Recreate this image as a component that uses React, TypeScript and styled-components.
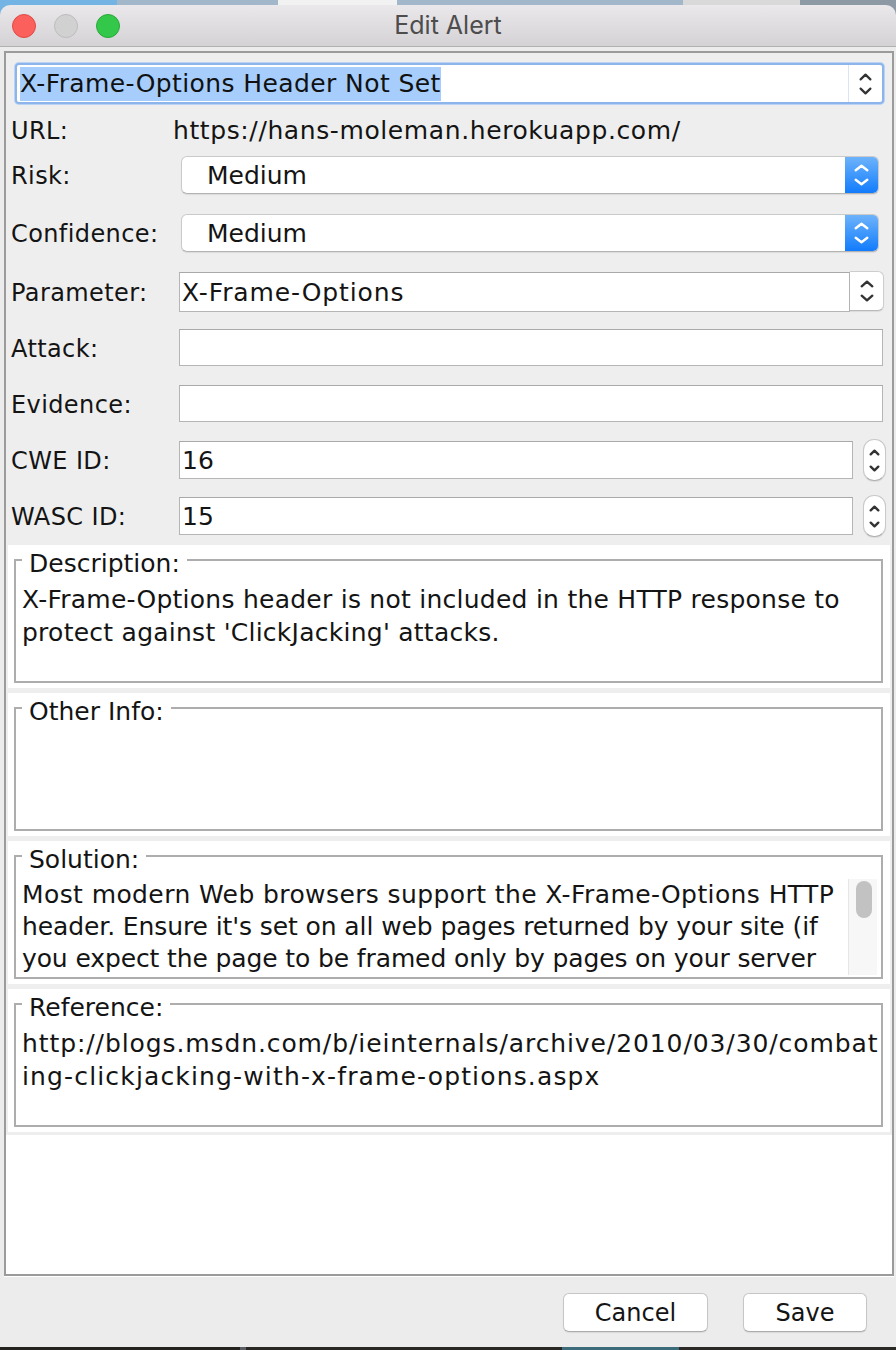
import React from 'react';
import styled, { createGlobalStyle } from 'styled-components';

const GlobalStyle = createGlobalStyle`
  * { box-sizing: border-box; }
  html, body { margin: 0; padding: 0; }
  body {
    width: 896px;
    height: 1350px;
    overflow: hidden;
    background: #ececec;
    font-family: "DejaVu Sans", "Noto Sans", sans-serif;
    color: #161616;
  }
`;

const Window = styled.div`
  width: 896px;
  height: 1350px;
  display: flex;
  flex-direction: column;
  background: #ececec;
`;

const Desktop = styled.div`
  flex: none;
  padding-top: 5px;
  background: linear-gradient(
    90deg,
    #74b4e4 0 117px,
    #a3b7cb 117px 278px,
    #f2f2f2 278px 397px,
    #a3b7cb 397px 683px,
    #d9d9d9 683px 800px,
    #8d99a5 800px
  );
`;

const TitleBar = styled.div`
  height: 42px;
  display: grid;
  grid-template-columns: 1fr auto 1fr;
  align-items: center;
  background: linear-gradient(#eae8ea, #d4d2d4);
  border-bottom: 1px solid #b1b1b1;
  border-radius: 10px 10px 0 0;
`;

const Lights = styled.div`
  display: flex;
  gap: 18px;
  padding-left: 12px;
`;

const Light = styled.span<{ $fill: string; $edge: string }>`
  width: 24px;
  height: 24px;
  border-radius: 50%;
  background: ${(p) => p.$fill};
  border: 1px solid ${(p) => p.$edge};
`;

const Title = styled.div`
  font-family: Inter, "Liberation Sans", sans-serif;
  font-size: 25px;
  color: #4d4d4d;
  line-height: 1;
`;

const Frame = styled.div`
  margin: 4px 2px 0 4px;
  height: 1225px;
  border: 2px solid #9b9b9b;
  background: #ffffff;
  display: flex;
  flex-direction: column;
  box-shadow: 0 1px 0 #ffffff;
`;

const Form = styled.div`
  background: #eeeeee;
  padding: 0 6px 8px 5px;
  display: flex;
  flex-direction: column;
`;

const HeaderCombo = styled.div`
  margin: 10px 2px 0 4px;
  height: 41px;
  display: flex;
  background: #ffffff;
  border: 2px solid #8db5eb;
  border-radius: 4px;
  box-shadow: 0 0 0 1px #b9d3f4;
`;

const HeaderInput = styled.div`
  flex: 1;
  display: flex;
  align-items: center;
  padding-left: 3px;
  font-size: 25px;
  letter-spacing: 0.4px;
`;

const Selected = styled.span`
  display: inline-block;
  line-height: 34px;
  height: 34px;
  background: #a6cdfb;
  color: #111111;
  white-space: nowrap;
`;

const ComboArrow = styled.div`
  width: 34px;
  display: flex;
  align-items: center;
  justify-content: center;
  background: #ffffff;
  border-left: 1px solid #d9e5f5;
  border-radius: 0 4px 4px 0;
`;

const Row = styled.div<{ $mt: number; $h: number }>`
  display: grid;
  grid-template-columns: 168px 1fr;
  align-items: center;
  margin-top: ${(p) => p.$mt}px;
  height: ${(p) => p.$h}px;
`;

const Label = styled.div`
  padding-top: 2px;
  font-size: 24px;
  letter-spacing: 0.4px;
  line-height: 1;
  white-space: nowrap;
  color: #141414;
`;

const UrlValue = styled.div`
  margin-left: -6px;
  font-size: 25px;
  letter-spacing: 0.6px;
  line-height: 1;
  white-space: nowrap;
  color: #141414;
`;

const Select = styled.div`
  margin: 0 7px 0 2px;
  height: 38px;
  display: flex;
  background: #ffffff;
  border: 1px solid #cacaca;
  border-bottom-color: #b3b3b3;
  border-radius: 6px;
  box-shadow: 0 1px 1px rgba(0, 0, 0, 0.08);
  overflow: hidden;
`;

const SelectValue = styled.div`
  flex: 1;
  display: flex;
  align-items: center;
  padding-left: 25px;
  font-size: 25px;
  color: #141414;
`;

const BlueButton = styled.div`
  width: 33px;
  display: flex;
  align-items: center;
  justify-content: center;
  background: linear-gradient(#6db3fb, #127cfd);
`;

const ParamCombo = styled.div`
  margin-right: 2px;
  height: 40px;
  display: flex;
`;

const Field = styled.div<{ $h: number; $ls?: number }>`
  flex: 1;
  height: ${(p) => p.$h}px;
  display: flex;
  align-items: center;
  padding-left: 2px;
  background: #ffffff;
  border: 1px solid #b5b5b5;
  border-top-color: #a9a9a9;
  font-size: 25px;
  letter-spacing: ${(p) => p.$ls ?? 0}px;
  white-space: nowrap;
  color: #141414;
`;

const TextField = styled(Field)`
  margin-right: 3px;
`;

const ArrowButton = styled.div`
  width: 34px;
  height: 40px;
  margin-top: -1px;
  display: flex;
  align-items: center;
  justify-content: center;
  background: #ffffff;
  border: 1px solid #cdcdcd;
  border-left: none;
  border-bottom-color: #b9b9b9;
  border-radius: 0 6px 6px 0;
  box-shadow: 0 1px 1px rgba(0, 0, 0, 0.08);
`;

const SpinRow = styled.div`
  display: flex;
  align-items: center;
  gap: 10px;
`;

const Spinner = styled.div`
  width: 23px;
  height: 42px;
  display: flex;
  align-items: center;
  justify-content: center;
  background: #ffffff;
  border: 1px solid #c9c9c9;
  border-bottom-color: #b2b2b2;
  border-radius: 11px;
  box-shadow: 0 1px 1px rgba(0, 0, 0, 0.08);
`;

const Panels = styled.div`
  background: #eeeeee;
  padding: 0 2px 3px;
  display: flex;
  flex-direction: column;
  gap: 5px;
`;

const Panel = styled.div`
  background: #ffffff;
  padding: 14px 7px 5px 6px;
`;

const TitledBox = styled.div`
  position: relative;
  height: 124px;
  border: 2px solid #adadad;
  padding: 22px 0 0 6px;
`;

const Legend = styled.span`
  position: absolute;
  top: -12px;
  left: 6px;
  padding: 0 7px;
  background: #ffffff;
  font-size: 25px;
  line-height: 30px;
  color: #141414;
  white-space: nowrap;
`;

const TextLine = styled.div<{ $ls?: number }>`
  font-size: 25px;
  letter-spacing: ${(p) => p.$ls ?? 0.25}px;
  line-height: 33px;
  height: 33px;
  white-space: nowrap;
  overflow: hidden;
  color: #141414;
`;

const ScrollArea = styled.div`
  display: flex;
  height: 96px;
  margin-right: 4px;
`;

const ScrollText = styled.div`
  flex: 1;
  overflow: hidden;
`;

const ScrollLine = styled.div<{ $ls: number }>`
  font-size: 25px;
  letter-spacing: ${(p) => p.$ls}px;
  line-height: 32px;
  height: 32px;
  white-space: nowrap;
  color: #141414;
`;

const Track = styled.div`
  width: 29px;
  background: #f7f7f7;
  border-left: 1px solid #e6e6e6;
  padding: 2px 0 0 7px;
`;

const Thumb = styled.div`
  width: 16px;
  height: 37px;
  border-radius: 8px;
  background: #c2c2c2;
`;

const Filler = styled.div`
  flex: 1;
  background: #ffffff;
`;

const ButtonBar = styled.div`
  height: 71px;
  flex: none;
  display: flex;
  justify-content: flex-end;
  gap: 35px;
  padding: 17px 29px 0 0;
`;

const Button = styled.button<{ $w: number }>`
  width: ${(p) => p.$w}px;
  height: 39px;
  background: #ffffff;
  border: 1px solid #c6c6c6;
  border-bottom-color: #acacac;
  border-radius: 6px;
  box-shadow: 0 1px 1px rgba(0, 0, 0, 0.08);
  font-family: "DejaVu Sans", "Noto Sans", sans-serif;
  font-size: 24px;
  color: #141414;
  padding: 0;
`;

const BottomDesk = styled.div`
  height: 3px;
  flex: none;
  background: linear-gradient(90deg, #25231f 0 240px, #5b5e62 240px 246px, #2a2824 246px 562px, #3c6b7a 562px 679px, #2b2925 679px);
`;

type ChevProps = { color: string; w: number; h: number; gap: number; sw: number };

const Chevrons = ({ color, w, h, gap, sw }: ChevProps) => {
  const total = h * 2 + gap;
  const p = sw / 2 + 0.5;
  return (
    <svg width={w} height={total} viewBox={`0 0 ${w} ${total}`} fill="none">
      <polyline
        points={`${p},${h - p} ${w / 2},${p} ${w - p},${h - p}`}
        stroke={color}
        strokeWidth={sw}
        strokeLinecap="round"
        strokeLinejoin="round"
      />
      <polyline
        points={`${p},${h + gap + p} ${w / 2},${total - p} ${w - p},${h + gap + p}`}
        stroke={color}
        strokeWidth={sw}
        strokeLinecap="round"
        strokeLinejoin="round"
      />
    </svg>
  );
};

const solutionLines: { text: string; ls: number }[] = [
  { text: 'Most modern Web browsers support the X-Frame-Options HTTP', ls: 0.4 },
  { text: "header. Ensure it's set on all web pages returned by your site (if", ls: -0.1 },
  { text: 'you expect the page to be framed only by pages on your server', ls: -0.12 },
];

export default function App() {
  return (
    <>
      <GlobalStyle />
      <Window>
        <Desktop>
          <TitleBar>
            <Lights>
              <Light $fill="#fc605c" $edge="#de4b46" />
              <Light $fill="#d1d1d1" $edge="#bdbdbd" />
              <Light $fill="#34c84a" $edge="#28a83a" />
            </Lights>
            <Title>Edit Alert</Title>
            <div />
          </TitleBar>
        </Desktop>

        <Frame>
          <Form>
            <HeaderCombo>
              <HeaderInput>
                <Selected>X-Frame-Options Header Not Set</Selected>
              </HeaderInput>
              <ComboArrow>
                <Chevrons color="#333333" w={13} h={8} gap={6} sw={2.2} />
              </ComboArrow>
            </HeaderCombo>

            <Row $mt={6} $h={40}>
              <Label>URL:</Label>
              <UrlValue>https://hans-moleman.herokuapp.com/</UrlValue>
            </Row>

            <Row $mt={6} $h={38}>
              <Label>Risk:</Label>
              <Select>
                <SelectValue>Medium</SelectValue>
                <BlueButton>
                  <Chevrons color="#ffffff" w={15} h={8} gap={6} sw={2.4} />
                </BlueButton>
              </Select>
            </Row>

            <Row $mt={19} $h={40}>
              <Label>Confidence:</Label>
              <Select>
                <SelectValue>Medium</SelectValue>
                <BlueButton>
                  <Chevrons color="#ffffff" w={15} h={8} gap={6} sw={2.4} />
                </BlueButton>
              </Select>
            </Row>

            <Row $mt={19} $h={40}>
              <Label>Parameter:</Label>
              <ParamCombo>
                <Field $h={40} $ls={0.9}>X-Frame-Options</Field>
                <ArrowButton>
                  <Chevrons color="#333333" w={14} h={8} gap={6} sw={2.4} />
                </ArrowButton>
              </ParamCombo>
            </Row>

            <Row $mt={17} $h={37}>
              <Label>Attack:</Label>
              <TextField $h={37} />
            </Row>

            <Row $mt={19} $h={37}>
              <Label>Evidence:</Label>
              <TextField $h={37} />
            </Row>

            <Row $mt={17} $h={42}>
              <Label>CWE ID:</Label>
              <SpinRow>
                <Field $h={38}>16</Field>
                <Spinner>
                  <Chevrons color="#333333" w={11} h={7} gap={9} sw={2.4} />
                </Spinner>
              </SpinRow>
            </Row>

            <Row $mt={14} $h={42}>
              <Label>WASC ID:</Label>
              <SpinRow>
                <Field $h={38}>15</Field>
                <Spinner>
                  <Chevrons color="#333333" w={11} h={7} gap={9} sw={2.4} />
                </Spinner>
              </SpinRow>
            </Row>
          </Form>

          <Panels>
            <Panel>
              <TitledBox>
                <Legend>Description:</Legend>
                <TextLine>X-Frame-Options header is not included in the HTTP response to</TextLine>
                <TextLine>protect against 'ClickJacking' attacks.</TextLine>
              </TitledBox>
            </Panel>

            <Panel>
              <TitledBox>
                <Legend>Other Info:</Legend>
              </TitledBox>
            </Panel>

            <Panel>
              <TitledBox>
                <Legend>Solution:</Legend>
                <ScrollArea>
                  <ScrollText>
                    {solutionLines.map((l) => (
                      <ScrollLine key={l.text} $ls={l.ls}>
                        {l.text}
                      </ScrollLine>
                    ))}
                  </ScrollText>
                  <Track>
                    <Thumb />
                  </Track>
                </ScrollArea>
              </TitledBox>
            </Panel>

            <Panel>
              <TitledBox>
                <Legend>Reference:</Legend>
                <TextLine $ls={0.9}>http://blogs.msdn.com/b/ieinternals/archive/2010/03/30/combat</TextLine>
                <TextLine $ls={1.15}>ing-clickjacking-with-x-frame-options.aspx</TextLine>
              </TitledBox>
            </Panel>
          </Panels>

          <Filler />
        </Frame>

        <ButtonBar>
          <Button $w={145}>Cancel</Button>
          <Button $w={124}>Save</Button>
        </ButtonBar>
        <BottomDesk />
      </Window>
    </>
  );
}
